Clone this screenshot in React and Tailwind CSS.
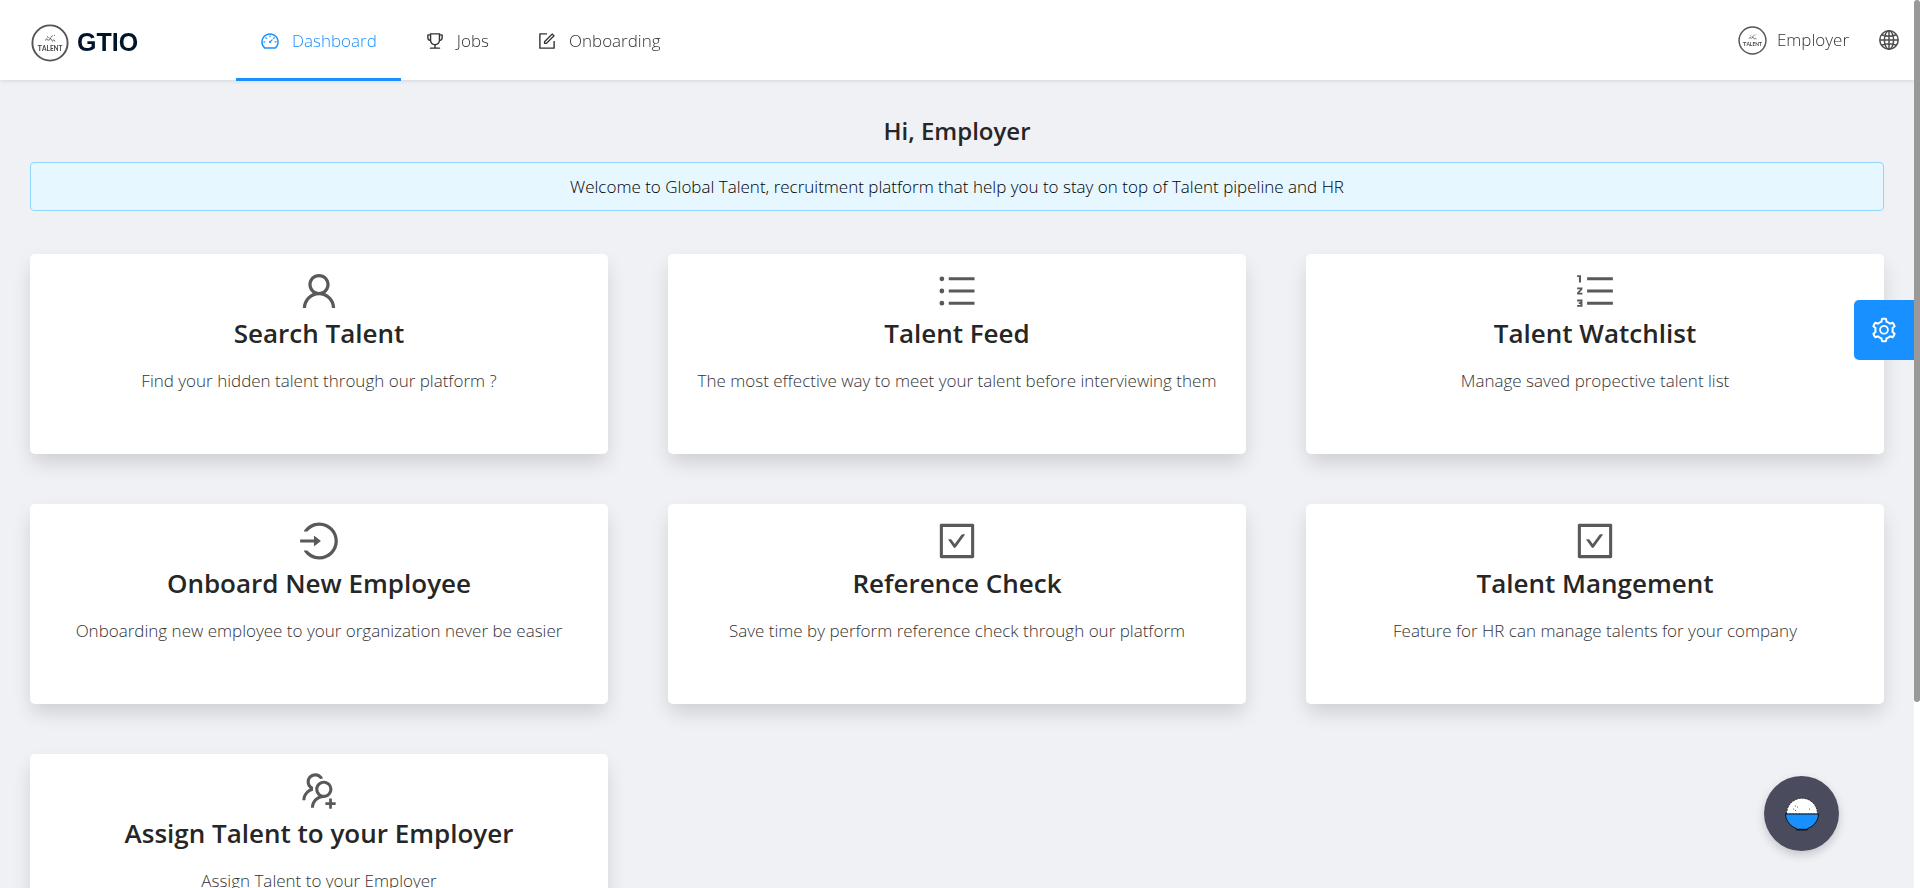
import {
  AiOutlineDashboard,
  AiOutlineTrophy,
  AiOutlineForm,
  AiOutlineUser,
  AiOutlineUnorderedList,
  AiOutlineOrderedList,
  AiOutlineLogin,
  AiOutlineCheckSquare,
  AiOutlineUsergroupAdd,
  AiOutlineSetting,
} from "react-icons/ai";

const navItems = [
  { label: "Dashboard", icon: AiOutlineDashboard, active: true },
  { label: "Jobs", icon: AiOutlineTrophy },
  { label: "Onboarding", icon: AiOutlineForm },
];

const cards = [
  { title: "Search Talent", text: "Find your hidden talent through our platform ?", icon: AiOutlineUser },
  { title: "Talent Feed", text: "The most effective way to meet your talent before interviewing them", icon: AiOutlineUnorderedList },
  { title: "Talent Watchlist", text: "Manage saved propective talent list", icon: AiOutlineOrderedList },
  { title: "Onboard New Employee", text: "Onboarding new employee to your organization never be easier", icon: AiOutlineLogin },
  { title: "Reference Check", text: "Save time by perform reference check through our platform", icon: AiOutlineCheckSquare },
  { title: "Talent Mangement", text: "Feature for HR can manage talents for your company", icon: AiOutlineCheckSquare },
  { title: "Assign Talent to your Employer", text: "Assign Talent to your Employer", icon: AiOutlineUsergroupAdd },
];

function TalentBadge({ className }) {
  return (
    <svg viewBox="0 0 38 38" className={className} aria-hidden="true">
      <circle cx="19" cy="19" r="17.6" fill="#fff" stroke="#555" strokeWidth="1.9" />
      <g fill="none" stroke="#555" strokeWidth="1">
        <path d="M14.5 16.500c0-2 2.500-2 2.500 0M18 16.500c0-2.200 2.800-2.200 2.800 0M21.500 17.500c0-2 2.300-2 2.300 0M16 12.500l1.500 1M20 13.500l1.500-2M23 12l.8-.8M18.500 14.200h1.500" />
      </g>
      <text x="19" y="26.500" textAnchor="middle" fontSize="7.5" fontWeight="700" fill="#444" fontFamily="Lato, sans-serif">
        T<tspan fontSize="6.500">ALENT</tspan>
      </text>
    </svg>
  );
}

function Globe() {
  return (
    <svg viewBox="0 0 20 20" className="size-5" fill="none" stroke="currentColor" strokeWidth="1.5" aria-hidden="true">
      <circle cx="10" cy="10" r="9.200" />
      <ellipse cx="10" cy="10" rx="4.600" ry="9.200" />
      <path d="M10 .8v18.400M.8 10h18.400M2.600 4.800c4.200 1.700 10.600 1.700 14.800 0M2.600 15.200c4.200-1.700 10.600-1.700 14.800 0" />
    </svg>
  );
}

function RiceBowl() {
  return (
    <svg viewBox="0 0 34 34" className="size-[34px]" aria-hidden="true">
      <path d="M1.500 17a15.500 15.800 0 0 1 31 0z" fill="#fff" stroke="#222" strokeWidth="1" strokeDasharray="2 1" />
      <path d="M.5 17h33c0 6-4.500 12.500-11 14.500v1H11.500v-1C5 29.500.5 23 .5 17z" fill="#1890ff" stroke="#111" strokeWidth="1" />
      <path d="M11.500 31.800h11v1.700h-11z" fill="#111" />
      <g fill="#333">
        <circle cx="10.500" cy="9" r=".5" />
        <circle cx="12.500" cy="10" r=".5" />
        <circle cx="8.500" cy="12" r=".5" />
        <circle cx="10.500" cy="13.500" r=".5" />
        <circle cx="24.500" cy="12" r=".5" />
      </g>
    </svg>
  );
}

function Card({ title, text, icon: Icon }) {
  return (
    <article className="flex h-[200px] flex-col items-center rounded-[5px] bg-white px-5 pt-[15px] text-center shadow-[0_10px_20px_-2px_rgba(0,0,0,0.15)]">
      <Icon className="size-11 text-[#595959]" />
      <h2 className="text-[26px] leading-10 font-semibold text-[#262626]">{title}</h2>
      <p className="mt-3.5 text-[17px] leading-7 font-light whitespace-nowrap text-[#333333]">{text}</p>
    </article>
  );
}

export default function App() {
  return (
    <div className="flex h-screen bg-[#f0f1f5] font-['Open_Sans','Noto_Sans',sans-serif]">
      <div className="relative min-w-0 flex-1 overflow-hidden">
        <div className="h-full overflow-y-auto [scrollbar-width:none]">
          <header className="sticky top-0 z-10 flex h-20 items-center justify-between bg-white pr-[15px] pl-[31px] shadow-[0_1px_4px_rgba(0,21,41,0.12)]">
            <div className="flex h-full items-center">
              <a href="#home" className="mt-1.5 flex w-[205px] items-center gap-2 font-['Liberation_Sans',sans-serif] text-[25px] font-bold text-[#001529]">
                <TalentBadge className="size-[38px]" />
                GTIO
              </a>
              <nav className="flex h-full">
                {navItems.map(({ label, icon: Icon, active }) => (
                  <a
                    key={label}
                    href={"#" + label.toLowerCase()}
                    className={
                      active
                        ? "flex h-[81px] items-center gap-3 border-b-3 border-[#1890ff] px-6 pt-1 text-[17px] font-light text-[#1890ff]"
                        : "flex h-[81px] items-center gap-3 border-b-3 border-transparent px-6 pt-1 text-[17px] font-light text-[#333333]"
                    }
                  >
                    <Icon className="size-5" />
                    {label}
                  </a>
                ))}
              </nav>
            </div>
            <div className="flex items-center gap-[30px]">
              <button type="button" className="flex items-center gap-2.5 text-[17px] font-light text-[#333333]">
                <TalentBadge className="size-[29px]" />
                Employer
              </button>
              <button type="button" aria-label="Language" className="text-[#4d4d4d]">
                <Globe />
              </button>
            </div>
          </header>

          <main className="px-[30px] pt-[31px] pb-12">
            <h1 className="text-center text-2xl leading-10 font-semibold text-[#262626]">Hi, Employer</h1>
            <div role="status" className="mt-[11px] rounded-sm border border-[#91d5ff] bg-[#e6f7ff] py-2.5 text-center text-[17px] leading-[27px] font-light text-black">
              Welcome to Global Talent, recruitment platform that help you to stay on top of Talent pipeline and HR
            </div>
            <section className="mt-[43px] grid grid-cols-3 gap-x-[60px] gap-y-[50px]">
              {cards.map((card) => (
                <Card key={card.title} {...card} />
              ))}
            </section>
          </main>
        </div>

        <button type="button" aria-label="Settings" className="absolute top-[300px] right-0 z-20 flex size-[60px] items-center justify-center rounded-l-[5px] bg-[#1890ff] text-white">
          <AiOutlineSetting className="size-7" />
        </button>
        <button type="button" aria-label="Assistant" className="absolute right-[75px] bottom-[37px] z-20 flex size-[75px] items-center justify-center rounded-full bg-[#4b4b5e] shadow-[0_4px_10px_rgba(0,0,0,0.18)]">
          <RiceBowl />
        </button>
      </div>
      <div className="w-1.5 bg-white">
        <div className="h-[79%] rounded-full bg-[#999999]" />
      </div>
    </div>
  );
}
